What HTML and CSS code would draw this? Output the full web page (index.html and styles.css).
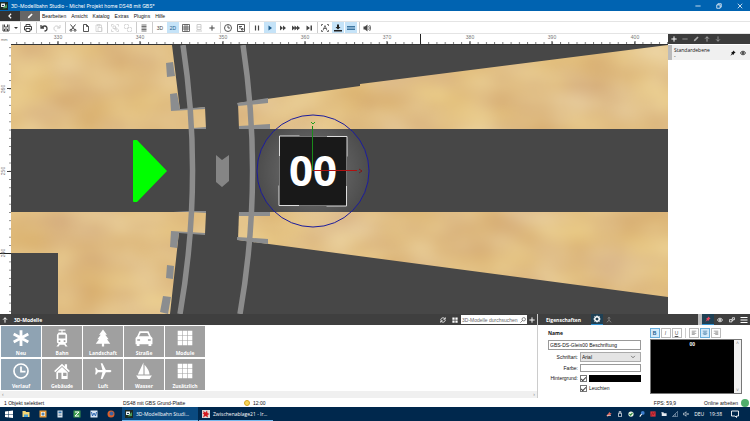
FILE: index.html
```html
<!DOCTYPE html>
<html lang="de">
<head>
    <meta charset="UTF-8">
    <meta name="viewport" content="width=device-width, initial-scale=1.0">
    <title>3D-Modellbahn Studio</title>
    <link rel="stylesheet" href="styles.css">
</head>
<body>
    <!-- Shared icons -->
    <svg class="sprite" aria-hidden="true">
        <symbol id="back" viewBox="0 0 16 16"><path d="M11 2 5 8l6 6" fill="none" stroke="currentColor" stroke-width="3"/></symbol>
        <symbol id="pencil" viewBox="0 0 16 16"><path d="m2 14 1-4 9-9 3 3-9 9z"/></symbol>
        <symbol id="save" viewBox="0 0 16 16"><path d="M2 1v13h12V1M5 14v-4h6v4M5 1v5h6V1" fill="none" stroke="currentColor" stroke-width="2"/></symbol>
        <symbol id="print" viewBox="0 0 16 16"><path d="M4 5V1h8v4M4 12H1V5h14v7h-3M4 9h8v6H4z" fill="none" stroke="currentColor" stroke-width="2"/></symbol>
        <symbol id="undo" viewBox="0 0 16 16"><path d="M2 2v6h6M3 8c3-6 11-5 11 1 0 3-2 5-5 5" fill="none" stroke="currentColor" stroke-width="2.6"/></symbol>
        <symbol id="redo" viewBox="0 0 16 16"><path d="M14 2v6H8m5 0C10 2 2 3 2 9c0 3 2 5 5 5" fill="none" stroke="currentColor" stroke-width="2"/></symbol>
        <symbol id="cut" viewBox="0 0 16 16"><path d="m3 1 8 10M13 1 5 11" fill="none" stroke="currentColor" stroke-width="2"/><circle cx="4" cy="12.500" r="2" fill="none" stroke="currentColor" stroke-width="2"/><circle cx="12" cy="12.500" r="2" fill="none" stroke="currentColor" stroke-width="2"/></symbol>
        <symbol id="copy" viewBox="0 0 16 16"><path d="M3 1h6l4 4v10H3zM9 1v4h4" fill="none" stroke="currentColor" stroke-width="1.800"/></symbol>
        <symbol id="paste" viewBox="0 0 16 16"><path d="M2 2h11v13H2zM5 1h5v3H5zM6 7h8v8H6z" fill="none" stroke="currentColor" stroke-width="1.500"/></symbol>
        <symbol id="group" viewBox="0 0 16 16"><path d="M1 5V1h4M11 1h4v4M15 11v4h-4M5 15H1v-4M4 4h5v5H4zM8 8h4v4H8z" fill="none" stroke="currentColor" stroke-width="1.500"/></symbol>
        <symbol id="ungroup" viewBox="0 0 16 16"><path d="M1 1h8v8H1zM7 7h8v8H7z" fill="none" stroke="currentColor" stroke-width="1.500" stroke-dasharray="3 1"/></symbol>
        <symbol id="list" viewBox="0 0 16 16"><path d="M3 2h10M3 5h10M3 8h10M3 11h10M3 14h10" stroke="currentColor" stroke-width="1.500"/></symbol>
        <symbol id="grid" viewBox="0 0 16 16"><path d="M1 1h14v14H1zM1 6h14M1 10h14M6 1v14M10 1v14" fill="none" stroke="currentColor" stroke-width="1.500"/></symbol>
        <symbol id="snap" viewBox="0 0 16 16"><path d="M4 1h8v10H4zM4 6h8M2 14h12" fill="none" stroke="currentColor" stroke-width="2"/></symbol>
        <symbol id="plus" viewBox="0 0 16 16"><path d="M8 1v14M1 8h14" stroke="currentColor" stroke-width="2.600"/></symbol>
        <symbol id="minus" viewBox="0 0 16 16"><path d="M1 8h14" stroke="currentColor" stroke-width="2"/></symbol>
        <symbol id="clock" viewBox="0 0 16 16"><circle cx="8" cy="8" r="7" fill="none" stroke="currentColor" stroke-width="1.800"/><path d="M8 3v5h4" fill="none" stroke="currentColor" stroke-width="1.800"/></symbol>
        <symbol id="frame" viewBox="0 0 16 16"><path d="M1 1h14v14H1zM4 5h6M4 8h4M9 9h3v3H9z" fill="none" stroke="currentColor" stroke-width="1.800"/></symbol>
        <symbol id="pause" viewBox="0 0 16 16"><path d="M5 3v10M11 3v10" stroke="currentColor" stroke-width="2.400"/></symbol>
        <symbol id="play" viewBox="0 0 16 16"><path d="m5 3 7 5-7 5z"/></symbol>
        <symbol id="fast" viewBox="0 0 16 16"><path d="m2 3 6 5-6 5zM8 3l6 5-6 5z"/></symbol>
        <symbol id="faster" viewBox="0 0 16 16"><path d="m0 3 6 5-6 5zM5 3l6 5-6 5zM10 3l6 5-6 5z"/></symbol>
        <symbol id="end" viewBox="0 0 16 16"><path d="m3 3 7 5-7 5zM11 3h3v10h-3z"/></symbol>
        <symbol id="marks" viewBox="0 0 16 16"><path d="M1 4V1h3M12 1h3v3M15 12v3h-3M4 15H1v-3M4 13l4-10 4 10M5 9h6" fill="none" stroke="currentColor" stroke-width="1.500"/></symbol>
        <symbol id="ground" viewBox="0 0 16 16"><path d="M6 1h4v5h3l-5 5-5-5h3zM0 12h16v3H0z"/></symbol>
        <symbol id="track" viewBox="0 0 16 16"><path d="M0 5h16M0 8h16M0 11h16" stroke="currentColor" stroke-width="1.600"/></symbol>
        <symbol id="sound" viewBox="0 0 16 16"><path d="M1 5h3l5-4v14l-5-4H1z"/><path d="M11 4c2 2 2 6 0 8M13 2c3 3 3 9 0 12" fill="none" stroke="currentColor" stroke-width="1.500"/></symbol>
        <symbol id="up" viewBox="0 0 16 16"><path d="M8 15V2M3 7l5-5 5 5" fill="none" stroke="currentColor" stroke-width="2.600"/></symbol>
        <symbol id="down" viewBox="0 0 16 16"><path d="M8 1v13M3 9l5 5 5-5" fill="none" stroke="currentColor" stroke-width="2"/></symbol>
        <symbol id="pin" viewBox="0 0 16 16"><path d="m9 1 6 6-3 1-3 5-2-2-6 4 4-6-2-2 5-3z"/></symbol>
        <symbol id="eye" viewBox="0 0 16 16"><path d="M1 8c4-6 10-6 14 0-4 6-10 6-14 0z" fill="none" stroke="currentColor" stroke-width="2.400"/><circle cx="8" cy="8" r="2.500"/></symbol>
        <symbol id="link" viewBox="0 0 16 16"><path d="M1 7h7v6H1zM8 9h3V7h4V2H9v5" fill="none" stroke="currentColor" stroke-width="2"/></symbol>
        <symbol id="menu" viewBox="0 0 16 16"><path d="M1 3h14M1 8h14M1 13h14" stroke="currentColor" stroke-width="2.200"/></symbol>
        <symbol id="refresh" viewBox="0 0 16 16"><path d="M2 8c0-6 8-8 11-3M14 1v5H9M14 8c0 6-8 8-11 3M2 15v-5h5" fill="none" stroke="currentColor" stroke-width="2.200"/></symbol>
        <symbol id="tiles" viewBox="0 0 16 16"><path d="M1 1h6v6H1zM9 1h6v6H9zM1 9h6v6H1zM9 9h6v6H9z"/></symbol>
        <symbol id="search" viewBox="0 0 16 16"><circle cx="10" cy="6" r="4.500" fill="none" stroke="currentColor" stroke-width="1.800"/><path d="m7 9-6 6" stroke="currentColor" stroke-width="1.800"/></symbol>
        <symbol id="gear" viewBox="0 0 16 16"><circle cx="8" cy="8" r="4.500" fill="none" stroke="currentColor" stroke-width="3"/><path d="M8 1v2M8 13v2M1 8h2M13 8h2M3 3l1 1M12 12l1 1M13 3l-1 1M4 12l-1 1" stroke="currentColor" stroke-width="2"/></symbol>
        <symbol id="axes" viewBox="0 0 16 16"><path d="M8 1v8l-6 5M8 9l6 5M5 4l3-3 3 3" fill="none" stroke="currentColor" stroke-width="1.600"/></symbol>
        <symbol id="close" viewBox="0 0 16 16"><path d="m2 2 12 12M14 2 2 14" stroke="currentColor" stroke-width="2"/></symbol>
        <symbol id="restore" viewBox="0 0 16 16"><path d="M2 5h9v9H2zM5 5V2h9v9h-3" fill="none" stroke="currentColor" stroke-width="2"/></symbol>
        <symbol id="modules" viewBox="0 0 32 32"><path d="M3 3h8v8H3zM12 3h8v8h-8zM21 3h8v8h-8zM3 12h8v8H3zM12 12h8v8h-8zM21 12h8v8h-8zM3 21h8v8H3zM12 21h8v8h-8zM21 21h8v8h-8z"/></symbol>
        <symbol id="alignleft" viewBox="0 0 16 16"><path d="M2 3h12M2 6h8M2 9h12M2 12h8" stroke="currentColor" stroke-width="1.300"/></symbol>
        <symbol id="aligncenter" viewBox="0 0 16 16"><path d="M2 3h12M4 6h8M2 9h12M4 12h8" stroke="currentColor" stroke-width="1.300"/></symbol>
        <symbol id="alignright" viewBox="0 0 16 16"><path d="M2 3h12M6 6h8M2 9h12M6 12h8" stroke="currentColor" stroke-width="1.300"/></symbol>
        <symbol id="app" viewBox="0 0 16 16"><path d="M0 0h16v16H0z" fill="#1d2b24"/><path d="M2 3h8v7H2z" fill="#e8eef0"/><path d="m5 13 9-9v8z" fill="#4d9a58"/><path d="M4 6h4v2H4z" fill="#26405a"/></symbol>
    </svg>

    <header class="titlebar">
        <svg class="icon"><use href="#app"/></svg>
        <span class="title">3D-Modellbahn Studio - Michel Projekt home DS48 mit GBS*</span>
        <button class="window-button" aria-label="Minimieren"><svg class="icon small"><use href="#minus"/></svg></button>
        <button class="window-button" aria-label="Wiederherstellen"><svg class="icon small"><use href="#restore"/></svg></button>
        <button class="window-button" aria-label="Schließen"><svg class="icon small"><use href="#close"/></svg></button>
    </header>

    <nav class="menubar">
        <button class="mode" aria-label="Zurück"><svg class="icon small"><use href="#back"/></svg></button>
        <button class="mode edit" aria-label="Bearbeitungsmodus"><svg class="icon small"><use href="#pencil"/></svg></button>
        <a href="#">Bearbeiten</a>
        <a href="#">Ansicht</a>
        <a href="#">Katalog</a>
        <a href="#">Extras</a>
        <a href="#">Plugins</a>
        <a href="#">Hilfe</a>
    </nav>

    <div class="toolbar">
        <div class="tools first">
            <button aria-label="Speichern"><svg class="icon"><use href="#save"/></svg></button>
            <button class="caret" aria-label="Mehr"></button>
        </div>
        <div class="tools">
            <button aria-label="Drucken"><svg class="icon"><use href="#print"/></svg></button>
        </div>
        <div class="tools">
            <button aria-label="Rückgängig"><svg class="icon"><use href="#undo"/></svg></button>
            <button class="off" aria-label="Wiederholen"><svg class="icon"><use href="#redo"/></svg></button>
        </div>
        <div class="tools">
            <button aria-label="Ausschneiden"><svg class="icon"><use href="#cut"/></svg></button>
            <button aria-label="Kopieren"><svg class="icon"><use href="#copy"/></svg></button>
            <button class="off" aria-label="Einfügen"><svg class="icon"><use href="#paste"/></svg></button>
        </div>
        <div class="tools">
            <button class="off" aria-label="Gruppieren"><svg class="icon"><use href="#group"/></svg></button>
            <button class="off" aria-label="Gruppierung aufheben"><svg class="icon"><use href="#ungroup"/></svg></button>
        </div>
        <div class="tools">
            <button aria-label="Liste"><svg class="icon"><use href="#list"/></svg></button>
        </div>
        <div class="tools">
            <button>3D</button>
            <button class="on">2D</button>
            <button aria-label="Raster"><svg class="icon"><use href="#grid"/></svg></button>
            <button class="off" aria-label="Einrasten"><svg class="icon"><use href="#snap"/></svg></button>
            <button aria-label="Hinzufügen"><svg class="icon small"><use href="#plus"/></svg></button>
        </div>
        <div class="tools">
            <button aria-label="Uhr"><svg class="icon"><use href="#clock"/></svg></button>
            <button aria-label="Ansichtsfenster"><svg class="icon"><use href="#frame"/></svg></button>
        </div>
        <div class="tools">
            <button aria-label="Pause"><svg class="icon"><use href="#pause"/></svg></button>
            <button class="on" aria-label="Start"><svg class="icon"><use href="#play"/></svg></button>
            <button aria-label="Schnell"><svg class="icon"><use href="#fast"/></svg></button>
            <button aria-label="Schneller"><svg class="icon"><use href="#faster"/></svg></button>
            <button aria-label="Ende"><svg class="icon"><use href="#end"/></svg></button>
        </div>
        <div class="tools">
            <button aria-label="Beschriftung"><svg class="icon"><use href="#marks"/></svg></button>
            <button class="on dark" aria-label="Auf Boden setzen"><svg class="icon"><use href="#ground"/></svg></button>
            <button class="on" aria-label="Gleise"><svg class="icon"><use href="#track"/></svg></button>
        </div>
        <div class="tools last">
            <button aria-label="Ton"><svg class="icon"><use href="#sound"/></svg></button>
        </div>
    </div>

    <main class="workspace">
        <div class="plan">
            <div class="unit">mm</div>
            <svg class="ruler">
                <defs>
                    <pattern id="ticks-x" x="5.200" y="0" width="8.240" height="11" patternUnits="userSpaceOnUse"><path d="M.500 8v3" stroke="#777"/></pattern>
                </defs>
                <rect width="100%" height="11" fill="url(#ticks-x)"/>
                <path d="M47 7v4M129 7v4M212 7v4M294 7v4M376 7v4M459 7v4M541 7v4M624 7v4" stroke="#444"/>
                <path d="M409.500 0v11" stroke="#222"/>
                <path d="M0 10.500h3000" stroke="#333"/>
                <g text-anchor="middle">
                    <text x="47" y="5">330</text>
                    <text x="129" y="5">340</text>
                    <text x="212" y="5">350</text>
                    <text x="294" y="5">360</text>
                    <text x="376" y="5">370</text>
                    <text x="459" y="5">380</text>
                    <text x="541" y="5">390</text>
                    <text x="624" y="5">400</text>
                </g>
            </svg>
            <svg class="ruler">
                <defs>
                    <pattern id="ticks-y" x="0" y="2.200" width="11" height="8.240" patternUnits="userSpaceOnUse"><path d="M9 .500h2" stroke="#888"/></pattern>
                </defs>
                <rect width="11" height="100%" fill="url(#ticks-y)"/>
                <path d="M7 43.500h4M7 126.500h4" stroke="#444"/>
                <path d="M0 208.500h11" stroke="#222"/>
                <g text-anchor="middle">
                    <text transform="translate(5 44) rotate(-90)">260</text>
                    <text transform="translate(5 126) rotate(-90)">250</text>
                    <text transform="translate(5 208) rotate(-90)">240</text>
                </g>
            </svg>
            <svg class="scene" viewBox="11 45 657 269" preserveAspectRatio="xMinYMin slice">
                <defs>
                    <filter id="sand" x="0" y="0" width="1" height="1" color-interpolation-filters="sRGB">
                        <feTurbulence type="fractalNoise" baseFrequency=".016 .024" numOctaves="2" seed="7"/>
                        <feColorMatrix values=".12 0 0 0 .82  .2 .03 0 0 .63  .18 .14 0 0 .36  0 0 0 0 1"/>
                        <feComposite in2="SourceGraphic" operator="in"/>
                    </filter>
                    <radialGradient id="glow">
                        <stop offset=".6" stop-color="#fff" stop-opacity=".12"/>
                        <stop offset="1" stop-color="#fff" stop-opacity=".03"/>
                    </radialGradient>
                </defs>
                <rect x="11" y="45" width="657" height="269" fill="#474747"/>
                <g filter="url(#sand)">
                    <path d="M11 45h161l8 65 25-3 1 22H11z"/>
                    <path d="m238 103 122-17v-2l308-39v84H239z"/>
                    <path d="M11 212h195l-1 22-26-2-9 82H58v-61H11z"/>
                    <path d="M239 212h429v85l-430-57z"/>
                </g>
                <!-- sleepers -->
                <g fill="#8b8d8f">
                    <path d="m166 63 7-1 2 14-8 1zM170 94l7-1 3 16 25-2v2l-34 2zM193 128l13-1v2h-13z"/>
                    <path d="m237 103 31-5v5l-30 3zM239 126l31-2v5h-31z"/>
                    <path d="M239 212h31v4h-31zM237 237l31 2v5l-31-4z"/>
                    <path d="m171 231 34 2v2l-26-2-2 15-7-1zM167 265l7 1-1 13-7-1zM163 296l8 1-3 17-8-2zM173 211h33v2z"/>
                </g>
                <!-- rails -->
                <g fill="none" stroke="#8c8c8c" stroke-width="5.500">
                    <path d="M183 45Q203.500 179.500 180 314"/>
                    <path d="M243 45Q263.500 179.500 240 314"/>
                </g>
                <path d="m216 155 6 5 7-5v26l-7 6-6-5z" fill="#858585"/>
                <path d="M133 141q0-1 1-1h3l30 31-30 31h-3q-1 0-1-1z" fill="#0f0"/>
                <!-- selected label with its gizmo -->
                <circle cx="313" cy="171" r="56" fill="url(#glow)" stroke="#1c1c9c"/>
                <rect x="279" y="136" width="68" height="70" fill="#191919"/>
                <path d="M279.500 156v-20h20M327 136.500h20v20M346.500 186v20h-20M299 205.500h-20v-20" fill="none" stroke="#ddd"/>
                <path d="M299 136.500h28M299 205.500h28M279.500 156v30M346.500 156v30" stroke="#777"/>
                <text class="label" x="313" y="186" text-anchor="middle">00</text>
                <path d="M312.500 126v45" stroke="#1a8a1a"/>
                <path d="m311 122 2 2 2-2" fill="none" stroke="#1ea01e"/>
                <path d="M313 170.500h44" stroke="#b01010"/>
                <path d="m359 169 3 2-3 2" fill="none" stroke="#801818"/>
            </svg>
        </div>
        <aside class="layers">
            <div class="layer-tools">
                <button aria-label="Ebene hinzufügen"><svg class="icon small"><use href="#plus"/></svg></button>
                <button class="dim" aria-label="Ebene löschen"><svg class="icon small"><use href="#minus"/></svg></button>
                <button class="dim" aria-label="Ebene umbenennen"><svg class="icon small"><use href="#pencil"/></svg></button>
                <button class="dim" aria-label="Nach oben"><svg class="icon small"><use href="#up"/></svg></button>
                <button class="dim" aria-label="Nach unten"><svg class="icon small"><use href="#down"/></svg></button>
            </div>
            <div class="layer">
                <div class="layer-name">Standardebene<br>-</div>
                <svg class="icon small"><use href="#pin"/></svg>
                <svg class="icon small"><use href="#eye"/></svg>
            </div>
        </aside>
    </main>

    <section class="panels">
        <div class="models">
            <div class="panel-head">
                <svg class="icon small"><use href="#up"/></svg>
                <h2>3D-Modelle</h2>
                <button class="push" aria-label="Aktualisieren"><svg class="icon small"><use href="#refresh"/></svg></button>
                <button aria-label="Kacheln"><svg class="icon small"><use href="#tiles"/></svg></button>
                <div class="search">
                    <input type="text" placeholder="3D-Modelle durchsuchen" aria-label="3D-Modelle durchsuchen">
                    <svg class="icon small"><use href="#search"/></svg>
                </div>
                <button aria-label="Modell hinzufügen"><svg class="icon small"><use href="#plus"/></svg></button>
            </div>
            <div class="tiles">
                <button class="tile blue">
                    <svg viewBox="0 0 32 32"><path d="M16 2v28M3 9l26 14M29 9 3 23" stroke="#fff" stroke-width="5"/></svg>
                    Neu
                </button>
                <button class="tile">
                    <svg viewBox="0 0 32 32"><path d="M10 1h12v2h-5v3h5l3 4v14l-3 2 4 5h-4l-2-3h-8l-2 3H6l4-5-3-2V10l3-4h5V3h-5zm0 9v7h12v-7zm0 10v3h3v-3zm9 0v3h3v-3z" fill-rule="evenodd"/></svg>
                    Bahn
                </button>
                <button class="tile">
                    <svg viewBox="0 0 32 32"><path d="m16 1 7 9h-3l6 8h-3l6 8H18v5h-4v-5H3l6-8H6l6-8H9z"/></svg>
                    Landschaft
                </button>
                <button class="tile">
                    <svg viewBox="0 0 32 32"><path d="M8 4h16l4 9 3 3v11h-2v3h-5v-3H8v3H3v-3H1V16l3-3zm2 3-3 6h18l-3-6zM4 18v3h5v-3zm19 0v3h5v-3z" fill-rule="evenodd"/></svg>
                    Straße
                </button>
                <button class="tile"><svg><use href="#modules"/></svg>Module</button>
                <button class="tile blue">
                    <svg viewBox="0 0 32 32"><circle cx="16" cy="16" r="12.500" fill="none" stroke="#fff" stroke-width="3"/><path d="M16 8v9h8" fill="none" stroke="#fff" stroke-width="3"/></svg>
                    Verlauf
                </button>
                <button class="tile">
                    <svg viewBox="0 0 32 32"><path d="M16 3 2 16l2 2L16 7l12 11 2-2-5-5V4h-4v4zM6 18v12h20V18L16 9zm3 1h6v11H9zm9 0h6v6h-6z" fill-rule="evenodd"/></svg>
                    Gebäude
                </button>
                <button class="tile">
                    <svg viewBox="0 0 32 32"><path d="M12 2h3l6 12h8q4 2 0 4h-8l-6 12h-3l3-12H7l-3 4H2l1-6-1-6h2l3 4h8z"/></svg>
                    Luft
                </button>
                <button class="tile">
                    <svg viewBox="0 0 32 32"><path d="M15 1v21H5zM17 5q8 9 9 17h-9zM2 24h28l-4 6H6z"/></svg>
                    Wasser
                </button>
                <button class="tile"><svg><use href="#modules"/></svg>Zusätzlich</button>
            </div>
            <div class="scrollbar"><span>‹</span><span>›</span></div>
        </div>

        <div class="properties">
            <div class="panel-head">
                <h2>Eigenschaften</h2>
                <button class="active" aria-label="Objekt"><svg class="icon"><use href="#gear"/></svg></button>
                <button class="dim" aria-label="Position"><svg class="icon small"><use href="#axes"/></svg></button>
                <span class="splitter"></span>
                <button class="active pinned" aria-label="Anheften"><svg class="icon small"><use href="#pin"/></svg></button>
                <button aria-label="Sichtbar"><svg class="icon small"><use href="#eye"/></svg></button>
                <button aria-label="Verknüpfen"><svg class="icon small"><use href="#link"/></svg></button>
                <button aria-label="Menü"><svg class="icon"><use href="#menu"/></svg></button>
            </div>
            <form class="property-form">
                <div class="fields">
                    <label class="name-label" for="name">Name</label>
                    <input class="wide" type="text" id="name" value="GBS-DS-Gleis00 Beschriftung">
                    <label for="font">Schriftart:</label>
                    <div class="select">
                        <select id="font"><option>Arial</option></select>
                        <svg class="icon small" viewBox="0 0 16 16"><path d="m3 5 5 5 5-5" fill="none" stroke="#555" stroke-width="2"/></svg>
                    </div>
                    <label for="color">Farbe:</label>
                    <input type="text" id="color">
                    <label for="background">Hintergrund:</label>
                    <div class="check-row">
                        <input type="checkbox" id="background" checked>
                        <button type="button" class="swatch" aria-label="Hintergrundfarbe"></button>
                    </div>
                    <div class="check-row second">
                        <input type="checkbox" id="glowing" checked>
                        <label for="glowing">Leuchten</label>
                    </div>
                </div>
                <div class="editor">
                    <div class="format">
                        <button type="button" class="on"><b>B</b></button>
                        <button type="button"><i>I</i></button>
                        <button type="button"><u>U</u></button>
                        <span class="divider"></span>
                        <button type="button" aria-label="Linksbündig"><svg class="icon small"><use href="#alignleft"/></svg></button>
                        <button type="button" class="on" aria-label="Zentriert"><svg class="icon small"><use href="#aligncenter"/></svg></button>
                        <button type="button" aria-label="Rechtsbündig"><svg class="icon small"><use href="#alignright"/></svg></button>
                    </div>
                    <div class="text-box">
                        <textarea aria-label="Text">00</textarea>
                        <div class="vertical-bar"><span>˄</span><span>˅</span></div>
                    </div>
                </div>
            </form>
        </div>
    </section>

    <div class="statusbar">
        <span class="selection">1 Objekt selektiert</span>
        <span class="object">DS48 mit GBS Grund-Platte</span>
        <span class="sun"></span>
        <span>12:00</span>
        <span class="fps">FPS: 59,9</span>
        <span class="online">Online arbeiten</span>
        <span class="globe"></span>
    </div>

    <footer class="taskbar">
        <button aria-label="Start"><svg class="icon" viewBox="0 0 16 16"><path d="m0 3 7-1v6H0zM8 2l8-1v7H8zM0 9h7v6l-7-1zM8 9h8v7l-8-1z" fill="#fff"/></svg></button>
        <button aria-label="Explorer"><svg class="icon" viewBox="0 0 16 16"><path d="M1 2h6l1 2h7v10H1z" fill="#f3d675"/><path d="M4 9h8v5H4z" fill="#4aa3d8"/></svg></button>
        <button aria-label="Outlook"><svg class="icon" viewBox="0 0 16 16"><path d="M1 1h14v14H1z" fill="#e79a3c"/><path d="M4 4h8v8H4z" fill="#f6ead5"/><circle cx="8" cy="8" r="3" fill="#5b86ad"/></svg></button>
        <button aria-label="Rechner"><svg class="icon" viewBox="0 0 16 16"><path d="M3 1h10v14H3z" fill="#dce6ee"/><path d="M5 3h6v3H5z" fill="#3579b5"/><path d="M5 8h6M5 11h6" stroke="#6b8197" stroke-width="1.500"/></svg></button>
        <button aria-label="Tabellen"><svg class="icon" viewBox="0 0 16 16"><path d="M1 1h14v14H1z" fill="#3f9e4f"/><path d="M4 4h8l-8 8h8" fill="none" stroke="#fff" stroke-width="2"/></svg></button>
        <button aria-label="Textverarbeitung"><svg class="icon" viewBox="0 0 16 16"><path d="M1 1h14v14H1z" fill="#d9e7f5"/><path d="m3 4 2 8 3-6 3 6 2-8" fill="none" stroke="#2863ad" stroke-width="2"/></svg></button>
        <button aria-label="Firefox"><svg class="icon" viewBox="0 0 16 16"><circle cx="8" cy="8" r="7" fill="#d9602b"/><circle cx="9" cy="7" r="4" fill="#3c63a2"/></svg></button>
        <button class="task current"><svg class="icon"><use href="#app"/></svg>3D-Modellbahn Studi...</button>
        <button class="task"><svg class="icon" viewBox="0 0 16 16"><path d="M0 0h16v16H0z" fill="#d9d9d9"/><path d="m1 1 6 4 3-4 1 5 4 2-4 2 1 5-5-3-5 3 2-6-3-3 3-1z" fill="#d2191f"/></svg>Zwischenablage21 - Ir...</button>
        <div class="tray">
            <svg class="icon small" viewBox="0 0 16 16"><path d="m1 12 5-5 3-5 2 4 4-1-3 4 1 3-4-1-5 4z" fill="#e06a5f"/><path d="M3 12h10" stroke="#ddd" stroke-width="2"/></svg>
            <svg class="icon small" viewBox="0 0 16 16"><path d="M4 6h8v9H4zM6 6V1h4v5" fill="none" stroke="#fff" stroke-width="1.800"/></svg>
            <svg class="icon small" viewBox="0 0 16 16"><circle cx="8" cy="8" r="7" fill="#e8f3e4"/><path d="m4 8 3 3 5-6" fill="none" stroke="#2c8a3a" stroke-width="3"/></svg>
            <svg class="icon small" viewBox="0 0 16 16"><circle cx="10" cy="5" r="5" fill="#3d7fd0"/><path d="m2 15 5-7" stroke="#fff" stroke-width="3"/></svg>
            <svg class="icon small" viewBox="0 0 16 16"><path d="M1 1h14v14H1z" fill="#d7333a"/><path d="m3 13 4-9 2 6 4-7" fill="none" stroke="#8f1c2a" stroke-width="2"/></svg>
            <svg class="icon small" viewBox="0 0 16 16"><path d="M2 6h13v7H2zM1 3h6v3H1z" fill="#e6ecf2"/></svg>
            <svg class="icon small" viewBox="0 0 16 16"><path d="M1 15 15 1v14zM9 7v8M5 11v4" fill="none" stroke="#8fa5bb" stroke-width="1.800"/></svg>
            <svg class="icon small" viewBox="0 0 16 16"><path d="M1 6h3l4-4v12l-4-4H1zM11 6l4 4M15 6l-4 4" fill="none" stroke="#fff" stroke-width="1.600"/></svg>
            <span>DEU</span>
            <span>19:38</span>
            <svg class="icon note" viewBox="0 0 16 16"><path d="M1 2h14v10h-4v3l-3-3H1z" fill="none" stroke="#fff" stroke-width="1.800"/></svg>
        </div>
    </footer>
</body>
</html>
```
FILE: styles.css
```css
* {
    box-sizing: border-box;
}
body {
    display: flex;
    flex-direction: column;
    height: 100vh;
    margin: 0;
    overflow: hidden;
    background-color: #fff;
    color: #111;
    font-family: "Liberation Sans", Arial, sans-serif;
    font-size: 5px;
    line-height: 6px;
}
button, input, select, textarea {
    margin: 0;
    padding: 0;
    border: 0;
    border-radius: 0;
    background: none;
    color: inherit;
    font: inherit;
}
button {
    display: flex;
    flex: none;
    align-items: center;
    justify-content: center;
}
a {
    color: inherit;
    text-decoration: none;
}
.sprite {
    display: none;
}
.icon {
    display: block;
    flex: none;
    width: 8px;
    height: 8px;
    fill: currentColor;
}
.icon.small {
    width: 6px;
    height: 6px;
}

/* Window header */
.titlebar {
    display: flex;
    flex: none;
    align-items: center;
    gap: 3px;
    height: 11px;
    padding-right: 1px;
    background-color: #0063b1;
    color: #fff;
    font-family: Inter, sans-serif;
}
.title {
    flex: 1;
}
.window-button {
    width: 18px;
    height: 11px;
}
.menubar {
    display: flex;
    flex: none;
    align-items: center;
    gap: 5px;
    height: 11px;
    border-bottom: 1px solid #e4e4e4;
}
.mode {
    width: 20px;
    height: 10px;
    background-color: #333;
    color: #fff;
}
.mode.edit {
    margin-left: -5px;
    margin-right: -3px;
    background-color: #666;
}
.toolbar {
    display: flex;
    flex: none;
    height: 12px;
    border-bottom: 1px solid #e4e4e4;
    color: #444;
}
.tools {
    display: flex;
    gap: 1px;
    padding: 0 2px 0 1px;
    border-right: 1px solid #ccc;
}
.tools.first {
    gap: 0;
    padding: 0;
}
.tools.last {
    border: 0;
}
.tools button {
    width: 12px;
    height: 11px;
}
.tools .caret {
    width: 8px;
}
.caret::after {
    content: "";
    border: 2px solid transparent;
    border-top-color: #333;
    border-bottom: 0;
}
.tools .off {
    color: #ccc;
}
.tools .on {
    background-color: #c5e3f8;
    color: #1c5c8c;
}
.tools .on.dark {
    color: #222;
}

/* Plan and layers */
.workspace {
    display: flex;
    flex: 1;
    min-height: 0;
}
.plan {
    display: grid;
    flex: 1;
    grid-template-columns: 11px 1fr;
    grid-template-rows: 11px 1fr;
    min-width: 0;
}
.unit {
    padding: 3px 0 0 1px;
    color: #777;
    font-size: 4px;
}
.ruler, .scene {
    display: block;
    width: 100%;
    height: 100%;
    min-height: 0;
    overflow: hidden;
}
.ruler text {
    fill: #777;
    font-size: 5px;
}
.scene .label {
    fill: #fff;
    font-family: "Open Sans", sans-serif;
    font-size: 42px;
    font-weight: bold;
}
.layers {
    width: 82px;
    background-color: #fff;
}
.layer-tools {
    display: flex;
    height: 10px;
    background-color: #3c3c3c;
    color: #fff;
}
.layer-tools button {
    width: 11px;
}
.dim {
    color: #aaa;
}
.layer {
    display: flex;
    align-items: center;
    gap: 4px;
    height: 15px;
    margin-top: 1px;
    padding-right: 4px;
    border-left: 4px solid #bbb;
    background-color: #f0f0f0;
    font-family: "Open Sans", sans-serif;
}
.layer-name {
    flex: 1;
    padding-left: 2px;
}

/* Bottom panels */
.panels {
    display: flex;
    flex: none;
    height: 84px;
}
.panel-head {
    display: flex;
    flex: none;
    align-items: center;
    height: 11px;
    background-color: #3f3f3f;
    color: #fff;
}
.panel-head h2 {
    margin: 0;
    font-family: "Open Sans", sans-serif;
    font-size: 5px;
    font-weight: bold;
}
.panel-head button {
    width: 12px;
    height: 11px;
}
.models {
    display: flex;
    flex: 1;
    flex-direction: column;
    min-width: 0;
    border-right: 1px solid #ccc;
}
.models .panel-head {
    padding-left: 2px;
}
.models h2 {
    padding-left: 6px;
}
.push {
    margin-left: auto;
}
.search {
    display: flex;
    align-items: center;
    width: 66px;
    height: 9px;
    padding-right: 1px;
    background-color: #fff;
    color: #555;
}
.search input {
    flex: 1;
    min-width: 0;
    padding-left: 1px;
}
.search input::placeholder {
    color: #666;
}
.models .search + button {
    width: 10px;
}
.tiles {
    display: grid;
    flex: 1;
    grid-template-columns: repeat(5, 40px);
    grid-template-rows: 31px 31px;
    gap: 2px 1px;
    padding: 1px 0 0 1px;
}
.tile {
    flex-direction: column;
    justify-content: space-between;
    padding: 3px 0 1px;
    background-color: #a0a0a0;
    color: #fff;
    font-family: "Open Sans", sans-serif;
    font-weight: bold;
}
.tile.blue {
    background-color: #8fa3b3;
}
.tile svg {
    width: 18px;
    height: 18px;
    fill: #fff;
}
.scrollbar {
    display: flex;
    flex: none;
    justify-content: space-between;
    height: 7px;
    padding: 0 2px;
    background-color: #f0f0f0;
    color: #888;
}
.properties {
    display: flex;
    flex-direction: column;
    width: 212px;
}
.properties .panel-head {
    padding-left: 8px;
}
.properties h2 {
    margin-right: 10px;
}
.panel-head .active {
    border-bottom: 1px solid #2f8fd0;
    background-color: #1f4054;
}
.panel-head .pinned {
    color: #e0435c;
}
.splitter {
    width: 4px;
    height: 11px;
    margin-left: auto;
    background-color: #bbb;
}
.property-form {
    display: flex;
    flex: 1;
    gap: 9px;
    padding: 3px 8px 4px 10px;
}
.fields {
    display: grid;
    flex: 1;
    grid-template-columns: 30px 1fr;
    grid-template-rows: 10px 10px 10px 8px 8px 8px;
    align-items: center;
    row-gap: 2px;
    column-gap: 2px;
}
.fields > label {
    text-align: right;
}
.fields .name-label {
    grid-column: 1 / 3;
    font-family: "Open Sans", sans-serif;
    font-weight: bold;
    text-align: left;
}
.fields .wide {
    grid-column: 1 / 3;
}
.fields input[type="text"] {
    width: 100%;
    height: 100%;
    padding-left: 1px;
    border: 1px solid #999;
}
.select {
    display: grid;
    grid-template-columns: 1fr 10px;
    align-items: center;
    height: 100%;
    border: 1px solid #aaa;
    background-color: #e4e4e4;
}
.select select, .select svg {
    grid-row: 1;
}
.select select {
    grid-column: 1 / 3;
    padding-left: 1px;
    appearance: none;
}
.select svg {
    grid-column: 2;
    pointer-events: none;
}
.check-row {
    display: flex;
    align-items: center;
    gap: 2px;
}
.check-row.second {
    grid-column: 2;
}
.check-row input {
    display: grid;
    place-items: center;
    flex: none;
    width: 7px;
    height: 7px;
    border: 1px solid #777;
    background-color: #fff;
    appearance: none;
}
.check-row input:checked::after {
    content: "";
    width: 4px;
    height: 2px;
    border: solid #444;
    border-width: 0 0 1px 1px;
    transform: rotate(-45deg);
}
.swatch {
    flex: 1;
    height: 7px;
    background-color: #000;
}
.editor {
    display: flex;
    flex: 1;
    flex-direction: column;
    gap: 1px;
}
.format {
    display: flex;
    gap: 1px;
}
.format button {
    width: 10px;
    height: 10px;
    border: 1px solid #bbb;
    color: #555;
}
.format .on {
    border-color: #6aaedc;
    background-color: #d4eafa;
    color: #1c5c8c;
}
.divider {
    width: 1px;
    margin: 0 2px;
    background-color: #ccc;
}
.text-box {
    display: flex;
    flex: 1;
    border: 1px solid #777;
}
.text-box textarea {
    flex: 1;
    min-width: 0;
    padding-top: 1px;
    background-color: #000;
    color: #fff;
    font-weight: bold;
    text-align: center;
    resize: none;
}
.vertical-bar {
    display: flex;
    flex-direction: column;
    align-items: center;
    justify-content: space-between;
    width: 7px;
    background-color: #f0f0f0;
    color: #888;
}

/* Status line and taskbar */
.statusbar {
    display: flex;
    flex: none;
    align-items: center;
    height: 9px;
    padding-left: 4px;
}
.selection {
    width: 119px;
}
.object {
    width: 121px;
}
.sun {
    width: 6px;
    height: 6px;
    margin-right: 3px;
    border: 1px solid #d9a520;
    border-radius: 50%;
    background-color: #f7d75a;
}
.fps {
    margin-left: auto;
    margin-right: 28px;
}
.globe {
    width: 8px;
    height: 8px;
    margin-left: 3px;
    margin-right: 1px;
    border-radius: 50%;
    background-color: #4fae6b;
}
.taskbar {
    display: flex;
    flex: none;
    align-items: center;
    height: 14px;
    background-color: #00284d;
    color: #fff;
    font-family: "Open Sans", sans-serif;
}
.taskbar button {
    width: 17px;
    height: 14px;
}
.taskbar .task {
    justify-content: flex-start;
    gap: 3px;
    width: 74px;
    margin-left: 1px;
    padding-left: 3px;
    border-bottom: 1px solid #76b9ed;
}
.taskbar .current {
    width: 76px;
    margin-left: 3px;
    background-color: #0a4a80;
}
.tray {
    display: flex;
    align-items: center;
    gap: 5px;
    margin-left: auto;
    padding-right: 11px;
}
.note {
    margin-left: 4px;
}
```
